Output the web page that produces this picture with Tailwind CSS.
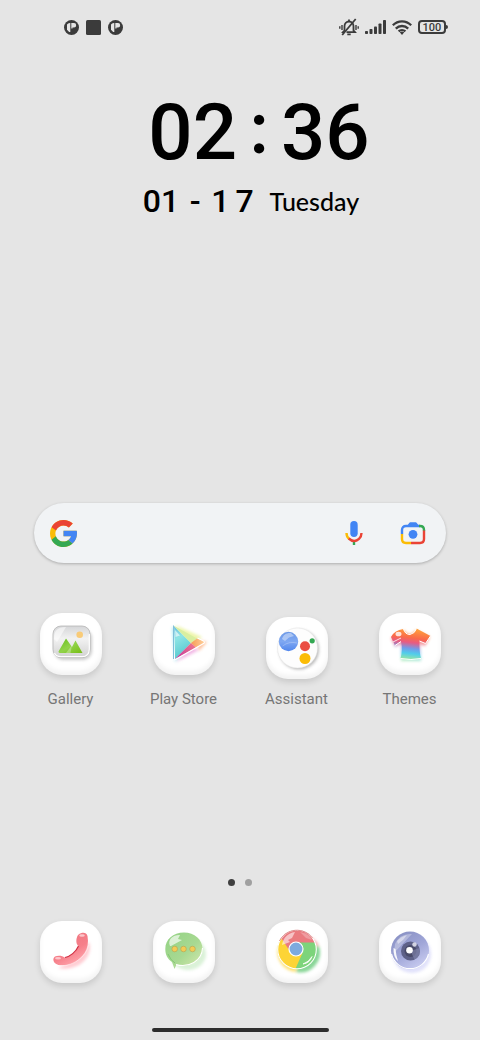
<!DOCTYPE html>
<html lang="en">
<head>
    <meta charset="UTF-8">
    <meta name="viewport" content="width=device-width, initial-scale=1.0">
    <title>Home Screen</title>
    <script src="https://cdn.jsdelivr.net/npm/@tailwindcss/browser@4"></script>
</head>
<body class="bg-[#e5e5e5] font-[Roboto,sans-serif]">

    <div class="flex min-h-screen flex-col">

        <!-- Status bar -->
        <header class="flex h-[54px] items-center justify-between pr-8 pl-16 text-[#3b3b3b]">
            <div class="flex items-center gap-[7px]">
                <svg class="size-[15px]" viewBox="0 0 15 15" aria-hidden="true">
                    <circle cx="7.5" cy="7.5" r="7.5" fill="currentColor"/>
                    <path d="M3 4.500Q4 2.800 6.300 3V12H5.200L3 9.800Z" fill="#e5e5e5"/>
                    <path d="M7.300 3H10A2.200 2.200 0 0 1 10 7.400H8.500V8.500H7.300Z" fill="#e5e5e5"/>
                </svg>
                <svg class="size-[15px]" viewBox="0 0 15 15" aria-hidden="true">
                    <rect width="15" height="15" rx="1.5" fill="currentColor"/>
                </svg>
                <svg class="size-[15px]" viewBox="0 0 15 15" aria-hidden="true">
                    <circle cx="7.5" cy="7.5" r="7.5" fill="currentColor"/>
                    <path d="M3 4.500Q4 2.800 6.300 3V12H5.200L3 9.800Z" fill="#e5e5e5"/>
                    <path d="M7.300 3H10A2.200 2.200 0 0 1 10 7.400H8.500V8.500H7.300Z" fill="#e5e5e5"/>
                </svg>
            </div>
            <div class="flex items-center gap-[6px]">
                <!-- Ringer off -->
                <svg class="h-[18px] w-5" viewBox="0 0 20 18" fill="none" stroke="currentColor" stroke-width="1.8" aria-hidden="true">
                    <path d="M7.5 14.2H16L14.5 12.4V8.2C14.5 5.6 12.6 3.5 10 3.5S5.5 5.6 5.5 8.2V12.4L4 14.2H5M10 3.5V1.6M8.3 16.4H11.7"/>
                    <path d="M16.7 1L3.2 17"/>
                    <path d="M3 7V12M17 7V12M.8 8.2V10.8M19.2 8.2V10.8" stroke-width="1.4"/>
                </svg>
                <!-- Signal -->
                <svg class="h-[14px] w-[21px]" viewBox="0 0 21 14" fill="currentColor" aria-hidden="true">
                    <rect x="0" y="11" width="3" height="3" rx=".8"/>
                    <rect x="4.5" y="9" width="3" height="5" rx=".8"/>
                    <rect x="9" y="6.5" width="3" height="7.5" rx=".8"/>
                    <rect x="13.5" y="3.5" width="3" height="10.5" rx=".8"/>
                    <rect x="18" y="0" width="3" height="14" rx=".8"/>
                </svg>
                <!-- Wi-Fi -->
                <svg class="h-[15px] w-5" viewBox="0 0 20 15" fill="none" stroke="currentColor" stroke-width="2.3" aria-hidden="true">
                    <path d="M.8 5.3C6 .1 14 .1 19.2 5.3M3.8 8.6C7.3 5.1 12.7 5.1 16.2 8.6M6.6 11.4C8.5 9.6 11.5 9.6 13.4 11.4"/>
                    <path d="M7.8 12.3Q10 10.7 12.2 12.3L10 15Z" fill="currentColor" stroke="none"/>
                </svg>
                <!-- Battery -->
                <div class="flex items-center">
                    <span class="flex h-[14px] w-7 items-center justify-center rounded-[4px] border-2 border-current text-[11px] leading-none font-medium">100</span>
                    <span class="h-1 w-[2px] rounded-r-sm bg-current"></span>
                </div>
            </div>
        </header>

        <!-- Clock widget -->
        <section class="mt-[31px] flex flex-col items-center pl-[22px] font-medium text-black">
            <time class="flex h-24 items-center pl-4 text-[78px] leading-none">
                <span>02</span><span class="w-11 pb-5 text-center font-[Lato,sans-serif]">:</span><span>36</span>
            </time>
            <div class="flex h-10 items-center">
                <time class="flex items-center text-[32px] leading-none">
                    <span>01</span><span class="w-8 text-center">-</span><span class="flex gap-[6px]"><span>1</span><span>7</span></span>
                </time>
                <span class="ml-4 font-[Lato,sans-serif] text-[25px] leading-none">Tuesday</span>
            </div>
        </section>

        <!-- Search bar -->
        <form class="mx-[34px] mt-[282px] flex h-[60px] items-center rounded-full bg-[#f1f3f5] pr-5 pl-4 shadow-[0_1px_3px_rgba(0,0,0,0.25)]">
            <svg class="size-[27px] shrink-0" viewBox="4 4 40 40" aria-hidden="true">
                <path fill="#fbbc05" d="M43.6 20H24v8h11.3c-1.6 4.7-6.1 8-11.3 8-6.6 0-12-5.4-12-12s5.4-12 12-12c3.1 0 5.8 1.2 8 3l5.7-5.7C34 6.1 29.3 4 24 4 13 4 4 13 4 24s9 20 20 20 20-9 20-20c0-1.300-.1-2.700-.4-4z"/>
                <path fill="#ea4335" d="M6.300 14.700l6.600 4.800C14.700 15.100 19 12 24 12c3.100 0 5.800 1.200 8 3l5.700-5.700C34 6.100 29.300 4 24 4 16.300 4 9.700 8.300 6.300 14.700z"/>
                <path fill="#34a853" d="M24 44c5.200 0 9.900-2 13.400-5.200l-6.200-5.200C29.200 35.100 26.700 36 24 36c-5.200 0-9.600-3.300-11.300-7.900l-6.500 5C9.500 39.600 16.200 44 24 44z"/>
                <path fill="#4285f4" d="M43.600 20H24v8h11.300c-.8 2.200-2.200 4.200-4.100 5.600l6.200 5.200C37 39.200 44 34 44 24c0-1.300-.1-2.700-.4-4z"/>
            </svg>
            <input type="search" aria-label="Search" class="mx-3 h-10 min-w-0 flex-1 bg-transparent text-base text-gray-800 outline-none">
            <button type="button" aria-label="Voice search" class="mr-[37px]">
                <svg class="h-[26px] w-[18px]" viewBox="0 0 18 26" fill="none">
                    <rect x="5.300" y="1" width="7.400" height="16" rx="3.700" fill="#4285f4"/>
                    <path d="M9 20.500V25" stroke="#34a853" stroke-width="2.400"/>
                    <path d="M1.500 13C1.500 15.700 2.600 17.700 4.200 19" stroke="#fbbc05" stroke-width="2.400"/>
                    <path d="M3.700 18.500C7 21.500 11 21.500 14 18.800C15.700 17.300 16.500 15.300 16.500 13" stroke="#ea4335" stroke-width="2.400"/>
                </svg>
            </button>
            <button type="button" aria-label="Search with camera">
                <svg class="h-6 w-[26px]" viewBox="0 0 26 24" fill="none" stroke-width="2.400">
                    <path d="M2 13V9C2 6.500 3.500 5 6 5H20" stroke="#4285f4"/>
                    <path d="M7 5L9 2.200C9.500 1.500 10 1.200 11 1.200H15C16 1.200 16.500 1.500 17 2.200L19 5Z" fill="#4285f4"/>
                    <path d="M19 5H20C22.500 5 24 6.500 24 9V10" stroke="#34a853"/>
                    <path d="M24 9.500V18C24 20.500 22.500 22 20 22H11" stroke="#ea4335"/>
                    <path d="M2 13V18C2 20.500 3.500 22 6 22H11" stroke="#fbbc05"/>
                    <circle cx="13" cy="13.300" r="4.400" fill="#4285f4"/>
                </svg>
            </button>
        </form>

        <!-- App row -->
        <nav aria-label="Apps" class="mt-[50px] grid grid-cols-4 px-[14px] text-[15px] leading-5 text-[#767676]">
            <a href="#gallery" class="flex flex-col items-center gap-[10px]">
                <span class="flex h-[66px] items-start">
                    <svg class="size-[62px] rounded-[22px] bg-white shadow-[0_3px_6px_rgba(0,0,0,0.13),inset_0_-4px_5px_rgba(0,0,0,0.05)]" viewBox="0 0 62 62" aria-hidden="true">
                        <defs>
                            <linearGradient id="galleryBg" x1="0" y1="0" x2="0" y2="1">
                                <stop offset="0" stop-color="#d5d6d8"/><stop offset=".4" stop-color="#f2f2f2"/><stop offset="1" stop-color="#d2d2d2"/>
                            </linearGradient>
                            <linearGradient id="galleryHill" x1="0" y1="0" x2="1" y2="1">
                                <stop offset="0" stop-color="#65bd18"/><stop offset=".5" stop-color="#91d34a"/><stop offset="1" stop-color="#76bd12"/>
                            </linearGradient>
                            <filter id="soft" x="-40%" y="-40%" width="180%" height="180%"><feGaussianBlur stdDeviation="1.800"/></filter>
                        </defs>
                        <rect x="14" y="16" width="38" height="31" rx="9" fill="#999" opacity=".5" filter="url(#soft)"/>
                        <rect x="13" y="13" width="37" height="31.500" rx="8" fill="url(#galleryBg)" stroke="#b5b5b5" stroke-width=".8"/>
                        <path d="M14.500 40Q16 43.700 21 43.700H42Q49.300 43.700 49.300 36V21" fill="none" stroke="#fff" stroke-width="1.200"/>
                        <path d="M14 26C14 18 17 14 26 14L17 29Z" fill="#fff" opacity=".55"/>
                        <path d="M18.500 38.500L26 25.500L32 34L35.500 27.500L42.500 40H20Q18.500 40 18.500 38.500Z" fill="url(#galleryHill)"/>
                        <path d="M26 40L32 32L30.500 40Z" fill="#fff" opacity=".3"/>
                        <circle cx="39.700" cy="21.700" r="3.300" fill="#f9cb78"/>
                    </svg>
                </span>
                Gallery
            </a>
            <a href="#play-store" class="flex flex-col items-center gap-[10px]">
                <span class="flex h-[66px] items-start">
                    <svg class="size-[62px] rounded-[22px] bg-white shadow-[0_3px_6px_rgba(0,0,0,0.13),inset_0_-4px_5px_rgba(0,0,0,0.05)]" viewBox="0 0 62 62" aria-hidden="true">
                        <defs>
                            <linearGradient id="playBlue" x1="0" y1="0" x2=".3" y2="1">
                                <stop offset="0" stop-color="#67bddd"/><stop offset=".4" stop-color="#8de4e5"/><stop offset="1" stop-color="#55c9cf"/>
                            </linearGradient>
                            <linearGradient id="playPink" x1="1" y1="0" x2="0" y2="1">
                                <stop offset="0" stop-color="#f27a8b"/><stop offset="1" stop-color="#c2339d"/>
                            </linearGradient>
                            <linearGradient id="playOrange" x1="0" y1="0" x2="1" y2="0">
                                <stop offset="0" stop-color="#f79a55"/><stop offset="1" stop-color="#ffd09a"/>
                            </linearGradient>
                        </defs>
                        <g filter="url(#soft)" opacity=".6">
                            <path d="M19 13L22 49L36 33Z" fill="#69dce8"/>
                            <path d="M22 12L49 24L38 32Z" fill="#e2ef75"/>
                            <path d="M42 26L54 29L46 38Z" fill="#ff9b5c"/>
                            <path d="M37 33L46 37L23 49Z" fill="#e987d3"/>
                        </g>
                        <path d="M20.500 12.500L38 30L21.500 46.500Z" fill="url(#playBlue)"/>
                        <path d="M20.500 12.500L44 25.500L38 30Z" fill="#d9efa0"/>
                        <path d="M44 25.500L50.500 28Q52 29 50.500 30L43 34.500L38 30Z" fill="url(#playOrange)"/>
                        <path d="M38 30L43 34.500L21.500 46.500Z" fill="url(#playPink)"/>
                        <path d="M20.500 12.500L21.500 47L51 30.300Q52 29 50.500 28L44.500 25" fill="none" stroke="#fff" stroke-width="1.100" stroke-linejoin="round"/>
                        <path d="M20.500 12.500V46" stroke="#64aed0" stroke-width=".8"/>
                        <path d="M22 17L27 22.500L22.500 24Z" fill="#fff" opacity=".6"/>
                    </svg>
                </span>
                Play Store
            </a>
            <a href="#assistant" class="flex flex-col items-center gap-[10px]">
                <span class="flex h-[66px] items-end">
                    <svg class="size-[62px] rounded-[22px] bg-white shadow-[0_3px_6px_rgba(0,0,0,0.13),inset_0_-4px_5px_rgba(0,0,0,0.05)]" viewBox="0 0 62 62" aria-hidden="true">
                        <defs>
                            <linearGradient id="assistBlue" x1="0" y1="0" x2="0" y2="1">
                                <stop offset="0" stop-color="#6b98e7"/><stop offset=".5" stop-color="#7fa8f2"/><stop offset="1" stop-color="#5287ed"/>
                            </linearGradient>
                        </defs>
                        <circle cx="33" cy="32.500" r="20" fill="#777" opacity=".5" filter="url(#soft)"/>
                        <circle cx="31.500" cy="31" r="20" fill="#fdfdfd" stroke="#e2e2e2" stroke-width=".5"/>
                        <circle cx="22.500" cy="24.500" r="9.700" fill="url(#assistBlue)"/>
                        <path d="M16 22C17 17.500 21 15.500 25 16L28 19L23 20.500L19 24Z" fill="#fff" opacity=".4"/>
                        <path d="M16.500 29Q23 24 31 26" stroke="#fff" stroke-width=".5" opacity=".5" fill="none"/>
                        <circle cx="39" cy="29.300" r="5" fill="#ea4e43"/>
                        <circle cx="46.200" cy="23.800" r="2.600" fill="#34a853"/>
                        <circle cx="39" cy="41.500" r="5.500" fill="#fbbc05"/>
                    </svg>
                </span>
                Assistant
            </a>
            <a href="#themes" class="flex flex-col items-center gap-[10px]">
                <span class="flex h-[66px] items-start">
                    <svg class="size-[62px] rounded-[22px] bg-white shadow-[0_3px_6px_rgba(0,0,0,0.13),inset_0_-4px_5px_rgba(0,0,0,0.05)]" viewBox="0 0 62 62" aria-hidden="true">
                        <defs>
                            <linearGradient id="shirt" x1=".55" y1="0" x2=".4" y2="1">
                                <stop offset="0" stop-color="#ffa23b"/><stop offset=".3" stop-color="#fa6a4a"/><stop offset=".45" stop-color="#e85b82"/><stop offset=".64" stop-color="#719bea"/><stop offset=".8" stop-color="#50cdeb"/><stop offset="1" stop-color="#9be7a0"/>
                            </linearGradient>
                        </defs>
                        <path d="M25 17Q30 25 37 17L51 24L46 33L41 31L42 48H22L22 31L16 34L12 25Z" fill="url(#shirt)" opacity=".65" filter="url(#soft)"/>
                        <path d="M24.500 16Q26 21 31 21Q36 20 37.500 15.500L51.500 23L46.500 30.500L40.500 28Q40 38 42 45.500Q32 47.500 21.500 45.500Q24 37 22 28.500L16 32.500L12 24Q15 17.500 24.500 16Z" fill="url(#shirt)"/>
                        <path d="M24.500 16Q26 21.500 31 21.500Q36 20.500 37.500 15.500M51.500 23L46.500 30.500L40.500 28M42 45.500Q32 47.500 21.500 45.500M22 28.500L16 32.500" fill="none" stroke="#fff" stroke-width="1"/>
                        <ellipse cx="19.500" cy="21" rx="3" ry="2.300" fill="#fff" opacity=".8"/>
                        <path d="M14 29L22 25" stroke="#fff" stroke-width="1" opacity=".8"/>
                    </svg>
                </span>
                Themes
            </a>
        </nav>

        <!-- Page indicator -->
        <div class="mt-auto flex justify-center gap-[10px]">
            <span class="size-[7px] rounded-full bg-[#3f3f3f]"></span>
            <span class="size-[7px] rounded-full bg-[#a0a0a0]"></span>
        </div>

        <!-- Dock -->
        <nav aria-label="Dock" class="mt-[35px] grid grid-cols-4 justify-items-center px-[14px]">
            <a href="#phone" aria-label="Phone">
                <svg class="size-[62px] rounded-[22px] bg-white shadow-[0_3px_6px_rgba(0,0,0,0.13),inset_0_-4px_5px_rgba(0,0,0,0.05)]" viewBox="0 0 62 62" aria-hidden="true">
                    <defs>
                        <linearGradient id="phoneRed" x1="0" y1="0" x2=".6" y2="1">
                            <stop offset="0" stop-color="#ec717b"/><stop offset=".65" stop-color="#f67f8a"/><stop offset="1" stop-color="#ffa5ac"/>
                        </linearGradient>
                    </defs>
                    <path d="M49 21C54 36 38 51 18 47L34 40Z" fill="#ff8e9c" opacity=".45" filter="url(#soft)"/>
                    <path d="M41.500 12C44 11.200 46.800 12 47.500 15C50 28 42.500 38 31 43C25 45 18 44.800 15.500 42.500C12.800 40.500 12.800 37 15 35.500C18 34 22.500 34.500 24.500 36.500C30 35.500 36 31 38.500 25C36 23.500 35.500 18 38 14Q39.500 12.500 41.500 12Z" fill="url(#phoneRed)"/>
                    <path d="M25 36.500C30 35.500 36 31 38.500 25" fill="none" stroke="#d02e42" stroke-width="1.200"/>
                    <path d="M17 44.500C32 46.500 47 35.500 48.500 24" fill="none" stroke="#fff" stroke-width=".7" opacity=".6"/>
                    <ellipse cx="42" cy="14.500" rx="2.800" ry="1.300" fill="#ffdfe1" opacity=".75"/>
                    <ellipse cx="18" cy="37.300" rx="3" ry="1.200" fill="#ffdfe1" opacity=".75"/>
                </svg>
            </a>
            <a href="#messages" aria-label="Messages">
                <svg class="size-[62px] rounded-[22px] bg-white shadow-[0_3px_6px_rgba(0,0,0,0.13),inset_0_-4px_5px_rgba(0,0,0,0.05)]" viewBox="0 0 62 62" aria-hidden="true">
                    <defs>
                        <linearGradient id="bubble" x1="0" y1="0" x2="1" y2="1">
                            <stop offset="0" stop-color="#92d284"/><stop offset=".55" stop-color="#a8d992"/><stop offset="1" stop-color="#d9eab0"/>
                        </linearGradient>
                    </defs>
                    <ellipse cx="35" cy="33" rx="18" ry="16" fill="#8ed586" opacity=".32" filter="url(#soft)"/>
                    <path d="M31 11.500C41.500 11.500 49.500 18.500 49.500 28S41.500 44.500 31 44.500Q26.500 44.500 23.500 43.500L21.500 48L19 41C14.500 38 12.300 33.500 12.300 28C12.300 18.500 20 11.500 31 11.500Z" fill="url(#bubble)"/>
                    <path d="M23 43.600C36 47 49 40 49.500 27" fill="none" stroke="#fff" stroke-width="1.100"/>
                    <path d="M17 25C14 18 21 13.500 27 14L25 18L29 19L18 25Z" fill="#fff" opacity=".65"/>
                    <path d="M15 33Q18 40 22 42" fill="none" stroke="#6fbd64" stroke-width="1" opacity=".6"/>
                    <g fill="#f3cc55" stroke="#b59745" stroke-width=".5">
                        <circle cx="21.700" cy="28" r="2.800"/><circle cx="30.500" cy="28" r="2.800"/><circle cx="39.500" cy="28" r="2.800"/>
                    </g>
                </svg>
            </a>
            <a href="#chrome" aria-label="Chrome">
                <svg class="size-[62px] rounded-[22px] bg-white shadow-[0_3px_6px_rgba(0,0,0,0.13),inset_0_-4px_5px_rgba(0,0,0,0.05)]" viewBox="0 0 62 62" aria-hidden="true">
                    <defs>
                        <clipPath id="chromeClip"><circle cx="31" cy="28.500" r="19.500"/></clipPath>
                    </defs>
                    <g filter="url(#soft)" opacity=".7">
                        <path d="M37 14A20 20 0 0 1 53 25L35 24Z" fill="#f08488"/>
                        <path d="M53 25A20 20 0 0 1 30 51L35 27Z" fill="#56c46b"/>
                        <path d="M12 26A20 20 0 0 0 30 51L31 30Z" fill="#ffd53c"/>
                    </g>
                    <g clip-path="url(#chromeClip)">
                        <rect x="10" y="7" width="44" height="43" fill="#7dd47b"/>
                        <path d="M10 5H55V21.500H30.500L24 31L10 12Z" fill="#ea7b80"/>
                        <path d="M14.500 16L25 32L36.500 32L28 51H5V16Z" fill="#fdd436"/>
                        <path d="M16 24C17 17 22 12 29 11L26 17L22 19L24 21Z" fill="#fff" opacity=".55"/>
                        <path d="M34 11Q44 13 46 19L40 17Z" fill="#fff" opacity=".25"/>
                    </g>
                    <circle cx="31" cy="28.500" r="19.300" fill="none" stroke="#fff" stroke-width="1.100"/>
                    <path d="M13.500 20A19.500 19.500 0 0 1 46.500 17" fill="none" stroke="#d76c70" stroke-width=".8"/>
                    <circle cx="30" cy="28" r="7" fill="#7daade" stroke="#fff" stroke-width="1.200"/>
                    <path d="M37 43Q43 41 46 35.500Q44 42 37 43Z" fill="#fff" stroke="#fff" stroke-width=".8"/>
                </svg>
            </a>
            <a href="#camera" aria-label="Camera">
                <svg class="size-[62px] rounded-[22px] bg-white shadow-[0_3px_6px_rgba(0,0,0,0.13),inset_0_-4px_5px_rgba(0,0,0,0.05)]" viewBox="0 0 62 62" aria-hidden="true">
                    <defs>
                        <linearGradient id="lens" x1=".2" y1="0" x2=".8" y2="1">
                            <stop offset="0" stop-color="#8890c3"/><stop offset=".5" stop-color="#a0a6d8"/><stop offset="1" stop-color="#cdd0f3"/>
                        </linearGradient>
                    </defs>
                    <circle cx="33" cy="33" r="19" fill="#b4b6f4" opacity=".4" filter="url(#soft)"/>
                    <circle cx="31" cy="29.500" r="19" fill="url(#lens)"/>
                    <path d="M12.500 33A19 19 0 0 0 49.500 33" fill="none" stroke="#fff" stroke-width="1.100"/>
                    <path d="M16 23C19 16 25 12.500 33 13L15 32Z" fill="#fff" opacity=".3"/>
                    <path d="M18 20Q22 15.500 28 14L24 19L19 23Z" fill="#fff" opacity=".45"/>
                    <circle cx="31.500" cy="30" r="9.500" fill="#5e6188"/>
                    <circle cx="31.500" cy="30" r="6" fill="#494b69"/>
                    <path d="M31.500 30L40.500 27A9.500 9.500 0 0 1 35.500 38.500Z" fill="#8588b0" opacity=".6"/>
                    <circle cx="30.500" cy="29.200" r="3.300" fill="#fff"/>
                    <circle cx="35.500" cy="23.500" r="2.200" fill="#e6e7f1" opacity=".85"/>
                    <path d="M14.500 27Q14 36 19 40Q17 34 16.500 28Z" fill="#fff" opacity=".9"/>
                </svg>
            </a>
        </nav>

        <!-- Gesture bar -->
        <div class="mt-[45px] mb-2 flex justify-center">
            <span class="h-[4px] w-[177px] rounded-full bg-[#2d2d2d]"></span>
        </div>
    </div>

</body>
</html>
